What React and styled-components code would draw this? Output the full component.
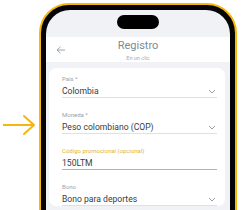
import React from "react";
import styled, { createGlobalStyle } from "styled-components";

const Global = createGlobalStyle`
  html, body { margin: 0; padding: 0; background: #ffffff; }
  body { font-family: Roboto, "Noto Sans", Arial, sans-serif; }
`;

const Stage = styled.div`
  width: 241px;
  height: 210px;
  overflow: hidden;
  display: flex;
  align-items: flex-start;
  background: #ffffff;
`;

const Side = styled.div`
  width: 39px;
  flex: 0 0 39px;
  padding-top: 114px;
  display: flex;
  justify-content: flex-start;
`;

const Phone = styled.div`
  margin-top: 3px;
  width: 198px;
  height: 300px;
  box-sizing: border-box;
  border: 2px solid #f6b80c;
  border-radius: 30px;
  background: #050505;
  padding: 5px;
  flex: 0 0 auto;
`;

const Screen = styled.div`
  height: 100%;
  border-radius: 24px;
  background: #f0f2f6;
  overflow: hidden;
  display: flex;
  flex-direction: column;
`;

const StatusArea = styled.div`
  height: 27px;
  box-sizing: border-box;
  padding-top: 5px;
  display: flex;
  justify-content: center;
`;

const Island = styled.div`
  width: 42px;
  height: 14px;
  border-radius: 7px;
  background: #000;
`;

const Header = styled.div`
  height: 25px;
  box-sizing: border-box;
  padding-top: 1.5px;
  background: #ffffff;
  position: relative;
  display: flex;
  flex-direction: column;
  align-items: center;
`;

const Back = styled.div`
  position: absolute;
  left: 10px;
  top: 9px;
  display: flex;
`;

const Title = styled.div`
  font-size: 11px;
  line-height: 13px;
  color: #7b8b98;
`;

const Subtitle = styled.div`
  margin-top: 3px;
  font-size: 5.5px;
  line-height: 7px;
  color: #a3acb4;
`;

const Card = styled.div`
  margin: 6px 5px 0 3px;
  background: #ffffff;
  border-radius: 7px;
  padding: 7px 8px 0 13px;
  display: flex;
  flex-direction: column;
  gap: 13px;
`;

const Field = styled.div`
  display: flex;
  flex-direction: column;
`;

const Label = styled.div`
  font-size: 6px;
  line-height: 8px;
  color: ${(p) => (p.$active ? "#e5b42c" : "#9ca3aa")};
  margin-bottom: 2px;
`;

const ValueRow = styled.div`
  height: 12px;
  display: flex;
  align-items: center;
  justify-content: space-between;
  border-bottom: ${(p) => (p.$active ? "1.5px solid #efb30c" : "1px solid #dde1e5")};
`;

const Value = styled.div`
  font-size: 8.6px;
  line-height: 12px;
  color: #363c42;
`;

const Chevron = () => (
  <svg width="8" height="5" viewBox="0 0 8 5" style={{ marginRight: 1 }}>
    <path d="M1 1 L4 4 L7 1" fill="none" stroke="#8c969e" strokeWidth="0.9" />
  </svg>
);

const fields = [
  { label: "País *", value: "Colombia", select: true },
  { label: "Moneda *", value: "Peso colombiano (COP)", select: true },
  { label: "Código promocional (opcional)", value: "150LTM", active: true },
  { label: "Bono", value: "Bono para deportes", select: true },
];

export default function App() {
  return (
    <>
      <Global />
      <Stage>
        <Side>
          <svg width="36" height="22" viewBox="0 0 36 22">
            <path d="M3 11 L34 11" stroke="#f6b510" strokeWidth="2" fill="none" />
            <path d="M24 2 L34 11 L24 20" stroke="#f6b510" strokeWidth="2" fill="none" strokeLinecap="round" strokeLinejoin="round" />
          </svg>
        </Side>
        <Phone>
          <Screen>
            <StatusArea>
              <Island />
            </StatusArea>
            <Header>
              <Back>
                <svg width="10" height="8" viewBox="0 0 10 8">
                  <path d="M1 4 L9 4 M4.5 0.8 L1 4 L4.5 7.2" stroke="#9aa6b0" strokeWidth="1" fill="none" />
                </svg>
              </Back>
              <Title>Registro</Title>
              <Subtitle>En un clic</Subtitle>
            </Header>
            <Card>
              {fields.map((f) => (
                <Field key={f.label}>
                  <Label $active={f.active}>{f.label}</Label>
                  <ValueRow $active={f.active}>
                    <Value>{f.value}</Value>
                    {f.select && <Chevron />}
                  </ValueRow>
                </Field>
              ))}
            </Card>
          </Screen>
        </Phone>
      </Stage>
    </>
  );
}
